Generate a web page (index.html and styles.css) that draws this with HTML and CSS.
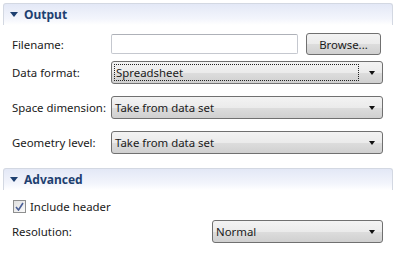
FILE: index.html
```html
<!doctype html>
<html lang="en">
  <head>
    <meta charset="UTF-8" />
    <title>Export</title>
    <link rel="stylesheet" href="styles.css">
  </head>
  <body>
    <!-- Output section -->
    <div class="section-head"><span class="twisty"></span>Output</div>
    <div class="form">
      <div class="row first">
        <label>Filename:</label>
        <div class="text-input"></div>
        <button class="browse">Browse...</button>
      </div>
      <div class="row tight">
        <label>Data format:</label>
        <div class="combo"><span class="focus">Spreadsheet</span><span class="arrow"></span></div>
      </div>
      <div class="row">
        <label>Space dimension:</label>
        <div class="combo"><span>Take from data set</span><span class="arrow"></span></div>
      </div>
      <div class="row">
        <label>Geometry level:</label>
        <div class="combo"><span>Take from data set</span><span class="arrow"></span></div>
      </div>
    </div>

    <!-- Advanced section -->
    <div class="section-head advanced"><span class="twisty"></span>Advanced</div>
    <div class="form">
      <div class="check-row">
        <span class="checkbox">
          <svg width="9" height="9" viewBox="0 0 9 9"><path d="M1 5 L3.5 8 L8 1" fill="none" stroke="#4a5f97" stroke-width="1.6"/></svg>
        </span>
        Include header
      </div>
      <div class="row res">
        <label>Resolution:</label>
        <div class="combo"><span>Normal</span><span class="arrow"></span></div>
      </div>
    </div>
  </body>
</html>
```

FILE: styles.css
```css
body {
  margin: 0;
  background: #fff;
  font-family: "Noto Sans", "Open Sans", sans-serif;
  font-size: 11.4px;
  color: #1a1a1a;
  width: 396px;
}
.section-head {
  margin: 3px 3px 0;
  height: 22px;
  box-sizing: border-box;
  border: 1px solid #d3d8e2;
  border-bottom: none;
  border-radius: 3px 3px 0 0;
  background: linear-gradient(#e3e8f6, #f3f5fc 70%, #fff);
  color: #1d3f70;
  font-weight: bold;
  font-size: 12px;
  display: flex;
  align-items: center;
  padding-left: 6px;
}
.section-head.advanced {
  margin-top: 14px;
}
.twisty {
  width: 0;
  height: 0;
  border-left: 4px solid transparent;
  border-right: 4px solid transparent;
  border-top: 5px solid #1d3f70;
  margin-right: 6px;
}
.form {
  padding: 0 13px 0 12px;
}
.row {
  display: flex;
  align-items: center;
  margin-top: 12px;
}
.row.first {
  margin-top: 8px;
}
.row.tight {
  margin-top: 6px;
}
.row label {
  width: 99px;
  flex: none;
}
.text-input {
  flex: 1;
  height: 20px;
  box-sizing: border-box;
  border: 1px solid #c5c8cf;
  border-top-color: #aeb1b8;
  border-radius: 2px;
}
.browse {
  width: 75px;
  height: 22px;
  margin: 0 2px 0 8px;
  font: inherit;
  color: #1a1a1a;
  border: 1px solid #707070;
  border-radius: 3px;
  background: linear-gradient(#f3f3f3, #ebebeb 50%, #dddddd 51%, #d0d0d0);
  padding: 0;
}
.combo {
  flex: 1;
  height: 23px;
  box-sizing: border-box;
  border: 1px solid #707070;
  border-radius: 3px;
  background: linear-gradient(#f3f3f3, #ebebeb 50%, #dddddd 51%, #d0d0d0);
  display: flex;
  align-items: center;
  padding: 0 7px 0 2px;
}
.combo span:first-child {
  flex: 1;
  padding-left: 1px;
}
.combo .focus {
  border: 1px dotted #222;
  height: 17px;
  line-height: 16px;
  box-sizing: border-box;
  margin-right: 10px;
}
.arrow {
  width: 0;
  height: 0;
  border-left: 3.5px solid transparent;
  border-right: 3.5px solid transparent;
  border-top: 4px solid #111;
}
.row.res {
  margin-top: 7px;
}
.row.res label {
  width: 200px;
}
.check-row {
  display: flex;
  align-items: center;
  height: 13px;
  margin-top: 10px;
  padding-left: 1px;
}
.checkbox {
  width: 11px;
  height: 11px;
  border: 1px solid #8e8f8f;
  background: linear-gradient(135deg, #e0e0e0, #fafafa);
  display: flex;
  align-items: center;
  justify-content: center;
  margin-right: 4px;
}
```
